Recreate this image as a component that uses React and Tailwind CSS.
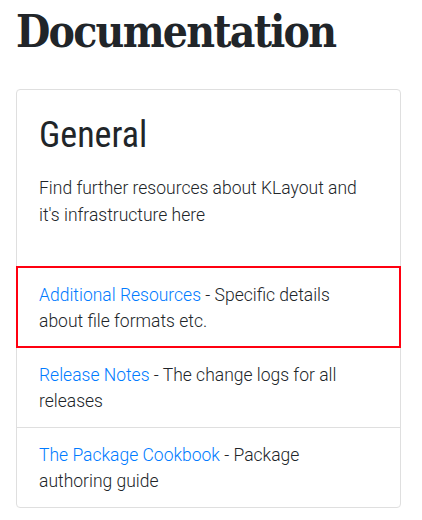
const items = [
  { link: 'Additional Resources', text: 'Specific details about file formats etc.', active: true },
  { link: 'Release Notes', text: 'The change logs for all releases' },
  { link: 'The Package Cookbook', text: 'Package authoring guide' },
]

export default function App() {
  return (
    <div className="min-h-[520px] bg-white pl-4 pt-[4px] text-[#212529]">
      <h1 className="mb-[30px] text-[44px] font-bold leading-[55px] tracking-[-1.75px] font-['Roboto_Slab','DejaVu_Serif',serif] [font-stretch:condensed]">
        Documentation
      </h1>
      <div className="w-[385px] rounded-[4px] border border-[#dfdfdf]">
        <div className="pb-[22px] pl-[22px] pr-[28px] pt-[24px]">
          <h2 className="text-[36px] leading-[43px] font-normal font-['Roboto_Condensed','Liberation_Sans_Narrow',Roboto,sans-serif]">
            General
          </h2>
          <p className="mb-4 mt-[18px] text-[17.5px] leading-[27px] font-light font-['Roboto',sans-serif]">
            Find further resources about KLayout and it's infrastructure here
          </p>
        </div>
        <ul className="font-['Roboto',sans-serif] text-[17.5px] font-light leading-[26px]">
          {items.map((it) => (
            <li
              key={it.link}
              className={`border-t border-[#dfdfdf] pb-[13px] pl-[22px] pr-[28px] pt-[14px] ${
                it.active ? 'outline-2 outline-solid outline-[#ff0010] -outline-offset-1' : ''
              }`}
            >
              <a href="#" className="text-[#007bff]">
                {it.link}
              </a>{' '}
              - {it.text}
            </li>
          ))}
        </ul>
      </div>
    </div>
  )
}
